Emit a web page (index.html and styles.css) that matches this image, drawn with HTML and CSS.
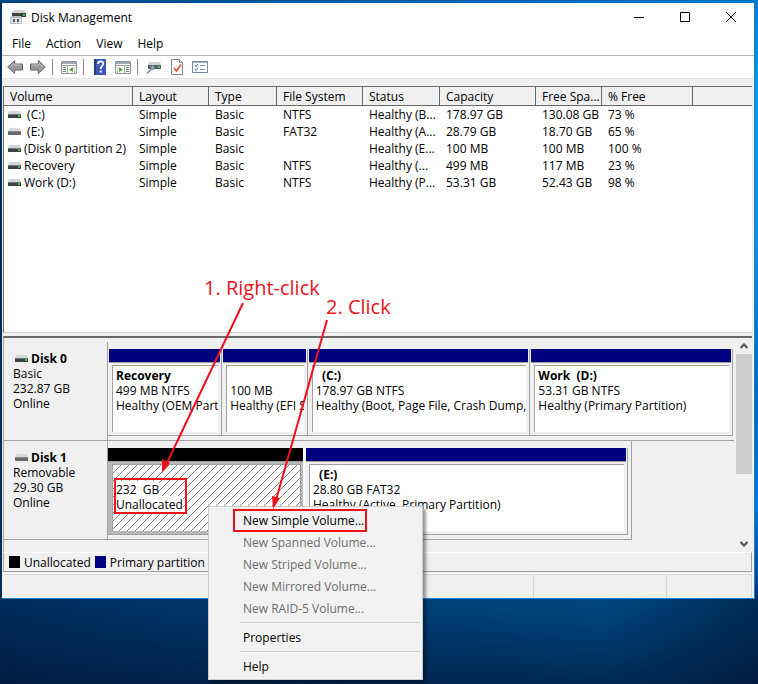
FILE: index.html
```
<!DOCTYPE html>
<html lang="en">
<head>
    <meta charset="UTF-8">
    <meta name="viewport" content="width=device-width, initial-scale=1.0">
    <title>Disk Management</title>
    <link rel="stylesheet" href="styles.css">
</head>
<body>
    <!-- shared drive icons -->
    <svg class="defs" width="0" height="0" aria-hidden="true">
        <symbol id="drive" viewBox="0 0 13 9">
            <path d="M1 1h11l1 3H0z" fill="#d4d6d6"/>
            <path d="M0 4h13v4H0z" fill="#3c4242"/>
            <path d="M0 4h13v1H0z" fill="#70777a"/>
            <path d="M10 5h2v2h-2z" fill="#38c850"/>
        </symbol>
        <symbol id="removable" viewBox="0 0 13 9">
            <path d="M1 1h11l1 3H0z" fill="#d8dada"/>
            <path d="M0 4h13v4H0z" fill="#686868"/>
            <path d="M0 4h13v1H0z" fill="#8c8c8c"/>
        </symbol>
    </svg>

    <main class="window">
        <header class="title-bar">
            <svg class="app-icon" width="16" height="16" viewBox="0 0 16 16">
                <path d="M4 1h11l1 3H2z" fill="#d0d4d4"/>
                <path d="M2 4h14v4H2z" fill="#394141"/>
                <path d="M13 5h2v2h-2z" fill="#3dcb55"/>
                <path d="M1 7h10l1 2v6H0V9z" fill="#b4b9bb"/>
                <path d="M1 9h10v5H1z" fill="#e4e6e6"/>
                <path d="M3 10h2v3H3zM7 10h2v3H7z" fill="#4c5355"/>
            </svg>
            <h1>Disk Management</h1>
            <div class="window-buttons">
                <button type="button" aria-label="Minimize"><svg width="10" height="10"><path d="M0 5.5h10" stroke="#000"/></svg></button>
                <button type="button" aria-label="Maximize"><svg width="10" height="10"><path d="M.5.5h9v9h-9z" fill="none" stroke="#000"/></svg></button>
                <button type="button" aria-label="Close"><svg width="10" height="10"><path d="M0 0l10 10M10 0L0 10" stroke="#000"/></svg></button>
            </div>
        </header>

        <nav class="menu-bar">
            <button type="button">File</button>
            <button type="button">Action</button>
            <button type="button">View</button>
            <button type="button">Help</button>
        </nav>

        <div class="toolbar">
            <div class="tool-group">
                <button type="button" aria-label="Back"><svg width="16" height="16" viewBox="0 0 16 16"><path d="M.7 8l7-6.5V5h7.8v6H7.700v3.500z" fill="#999" stroke="#666"/><path d="M3 8l4-3.500V6h7" fill="none" stroke="#c2c2c2"/></svg></button>
                <button type="button" aria-label="Forward"><svg width="16" height="16" viewBox="0 0 16 16"><path d="M15.300 8l-7-6.500V5H.5v6h7.800v3.500z" fill="#999" stroke="#666"/><path d="M2 6h7V4.500L13 8" fill="none" stroke="#c2c2c2"/></svg></button>
            </div>
            <div class="tool-group">
                <button type="button" aria-label="Show console tree"><svg width="16" height="16" viewBox="0 0 16 16"><path d="M.5 2.500h15v12H.5z" fill="#fff" stroke="#8a9099"/><path d="M1 3h14v2H1z" fill="#a4abb5"/><path d="M1 6.500h14M6.500 7v7" stroke="#9aa3ac"/><path d="M2 8.500h3M2 10.500h3M2 12.500h3" stroke="#5d9e52"/><path d="M12 8v5l-4-2.500z" fill="#55a345"/><path d="M13.500 8v6" stroke="#b7d6ae"/></svg></button>
            </div>
            <div class="tool-group">
                <button type="button" aria-label="Help"><svg width="16" height="16" viewBox="0 0 16 16"><path d="M2 0h12v16H2z" fill="#3c59b5"/><path d="M2 0h2v16H2z" fill="#243f8d"/><path d="M6 5c0-3.500 5.500-3.300 5.300-.2C11.200 7 8.700 7 8.700 10" fill="none" stroke="#fff" stroke-width="1.800"/><path d="M7.700 11.500h2v2h-2z" fill="#fff"/></svg></button>
                <button type="button" aria-label="Show action pane"><svg width="16" height="16" viewBox="0 0 16 16"><path d="M.5 2.500h15v12H.5z" fill="#fff" stroke="#8a9099"/><path d="M1 3h14v2H1z" fill="#a4abb5"/><path d="M1 6.500h14M9.500 7v7" stroke="#9aa3ac"/><path d="M11 8.500h3M11 10.500h3M11 12.500h3" stroke="#5d9e52"/><path d="M4 8v5l4-2.500z" fill="#55a345"/><path d="M2.500 8v6" stroke="#b7d6ae"/></svg></button>
            </div>
            <div class="tool-group">
                <button type="button" aria-label="Rescan disks"><svg width="16" height="16" viewBox="0 0 16 16"><path d="M3 3h11l1 3H2z" fill="#cdd2d2"/><path d="M2 6h13v4H2z" fill="#526262"/><path d="M12 7h2v2h-2z" fill="#46cc60"/><circle cx="6.500" cy="8.500" r="2" fill="#8fb0b8" stroke="#5f767e"/><path d="M5 10.500l-4 4" stroke="#71808a" stroke-width="1.500"/></svg></button>
                <button type="button" aria-label="Properties"><svg width="16" height="16" viewBox="0 0 16 16"><path d="M2.500.5h8l3 3v12h-11z" fill="#fff" stroke="#868686"/><path d="M10.500.5v3h3" fill="none" stroke="#868686"/><path d="M5 9l2.500 3L12 5.500" fill="none" stroke="#dc5c38" stroke-width="1.800"/></svg></button>
                <button type="button" aria-label="Options"><svg width="16" height="16" viewBox="0 0 16 16"><path d="M.5 2.500h15v11H.5z" fill="#fff" stroke="#7c8998"/><path d="M1 3.500h14" stroke="#a9b4c0"/><path d="M3 6l1 1.500L6 5M3 10l1 1.500L6 9" fill="none" stroke="#3a82c8"/><path d="M8 6.500h5M8 10.500h5" stroke="#8f9499"/></svg></button>
            </div>
        </div>

        <section class="volume-list">
            <table>
                <colgroup>
                    <col class="col-volume"><col class="col-layout"><col class="col-type"><col class="col-fs"><col class="col-status"><col class="col-capacity"><col class="col-free"><col class="col-percent"><col>
                </colgroup>
                <thead>
                    <tr><th>Volume</th><th>Layout</th><th>Type</th><th>File System</th><th>Status</th><th>Capacity</th><th>Free Spa...</th><th>% Free</th><th></th></tr>
                </thead>
                <tbody>
                    <tr><td><svg class="drive"><use href="#drive"/></svg>&nbsp;(C:)</td><td>Simple</td><td>Basic</td><td>NTFS</td><td>Healthy (B...</td><td>178.97 GB</td><td>130.08 GB</td><td>73 %</td><td></td></tr>
                    <tr><td><svg class="drive"><use href="#removable"/></svg>&nbsp;(E:)</td><td>Simple</td><td>Basic</td><td>FAT32</td><td>Healthy (A...</td><td>28.79 GB</td><td>18.70 GB</td><td>65 %</td><td></td></tr>
                    <tr><td><svg class="drive"><use href="#drive"/></svg>(Disk 0 partition 2)</td><td>Simple</td><td>Basic</td><td></td><td>Healthy (E...</td><td>100 MB</td><td>100 MB</td><td>100 %</td><td></td></tr>
                    <tr><td><svg class="drive"><use href="#drive"/></svg>Recovery</td><td>Simple</td><td>Basic</td><td>NTFS</td><td>Healthy (...</td><td>499 MB</td><td>117 MB</td><td>23 %</td><td></td></tr>
                    <tr><td><svg class="drive"><use href="#drive"/></svg>Work (D:)</td><td>Simple</td><td>Basic</td><td>NTFS</td><td>Healthy (P...</td><td>53.31 GB</td><td>52.43 GB</td><td>98 %</td><td></td></tr>
                </tbody>
            </table>
        </section>

        <section class="disk-pane">
            <div class="disks">
                <div class="disk">
                    <div class="disk-label">
                        <h2><svg class="drive"><use href="#drive"/></svg>Disk 0</h2>
                        <p>Basic</p>
                        <p>232.87 GB</p>
                        <p>Online</p>
                    </div>
                    <div class="partitions">
                        <div class="partition" style="flex-grow: 114">
                            <div class="bar"></div>
                            <div class="box"><h3>Recovery</h3><p>499 MB NTFS</p><p>Healthy (OEM Part</p></div>
                        </div>
                        <div class="partition" style="flex-grow: 85">
                            <div class="bar"></div>
                            <div class="box"><h3>&nbsp;</h3><p>100 MB</p><p>Healthy (EFI S</p></div>
                        </div>
                        <div class="partition" style="flex-grow: 223">
                            <div class="bar"></div>
                            <div class="box"><h3>&nbsp; (C:)</h3><p>178.97 GB NTFS</p><p>Healthy (Boot, Page File, Crash Dump, P</p></div>
                        </div>
                        <div class="partition" style="flex-grow: 203">
                            <div class="bar"></div>
                            <div class="box"><h3>Work &nbsp;(D:)</h3><p>53.31 GB NTFS</p><p>Healthy (Primary Partition)</p></div>
                        </div>
                    </div>
                </div>

                <div class="disk">
                    <div class="disk-label">
                        <h2><svg class="drive"><use href="#removable"/></svg>Disk 1</h2>
                        <p>Removable</p>
                        <p>29.30 GB</p>
                        <p>Online</p>
                    </div>
                    <div class="partitions short">
                        <div class="partition unallocated" style="flex-grow: 196">
                            <div class="bar"></div>
                            <div class="box"><h3>&nbsp;</h3><p><span>232 &nbsp;GB</span></p><p><span>Unallocated</span></p></div>
                        </div>
                        <div class="partition" style="flex-grow: 324">
                            <div class="bar"></div>
                            <div class="box"><h3>&nbsp; (E:)</h3><p>28.80 GB FAT32</p><p>Healthy (Active, Primary Partition)</p></div>
                        </div>
                    </div>
                </div>
            </div>
            <div class="scrollbar">
                <button type="button" aria-label="Scroll up"><svg width="8" height="6"><path d="M.5 5L4 1.500 7.500 5" fill="none" stroke="#505050" stroke-width="2"/></svg></button>
                <div class="thumb"></div>
                <button type="button" aria-label="Scroll down"><svg width="8" height="6"><path d="M.5 1L4 4.500 7.500 1" fill="none" stroke="#505050" stroke-width="2"/></svg></button>
            </div>
        </section>

        <div class="legend">
            <span class="swatch black"></span>Unallocated
            <span class="swatch navy"></span>Primary partition
        </div>
        <footer class="status-bar"><div></div><div></div><div></div></footer>
    </main>

    <div class="context-menu" role="menu">
        <button type="button" role="menuitem">New Simple Volume...</button>
        <button type="button" role="menuitem" disabled>New Spanned Volume...</button>
        <button type="button" role="menuitem" disabled>New Striped Volume...</button>
        <button type="button" role="menuitem" disabled>New Mirrored Volume...</button>
        <button type="button" role="menuitem" disabled>New RAID-5 Volume...</button>
        <hr>
        <button type="button" role="menuitem">Properties</button>
        <hr>
        <button type="button" role="menuitem">Help</button>
    </div>

    <!-- step markers -->
    <svg class="arrows" width="400" height="540" aria-hidden="true">
        <g fill="none" stroke="#f01018" stroke-width="2">
            <path d="M243 303L166 465M327 320L276 500"/>
            <path d="M115 479h71v34h-71zM234 510h132v21H234z"/>
        </g>
        <path d="M162 473l0-14 8 4zM273 509l-1-13 8 2z" fill="#f01018"/>
    </svg>
    <div class="step step-one">1. Right-click</div>
    <div class="step step-two">2. Click</div>
</body>
</html>
```
FILE: styles.css
```
:root {
    --face: #f0f0f0;
    --line: #a0a0a0;
    --dark: #696969;
    --navy: #000080;
}
* {
    box-sizing: border-box;
}
body {
    margin: 0;
    padding: 3px 3px 0 2px;
    min-height: 100vh;
    font: 12px/15px "Open Sans", "Noto Sans", sans-serif;
    color: #000;
    background:
        linear-gradient(90deg, #004585, #0078d0) top / 100% 3px no-repeat,
        linear-gradient(#0078d0, #0a9be0 15%, #1c8cd8 40%, #0068b8 65%, #0074d0 85%, #00386e) right top / 4px 598px no-repeat,
        linear-gradient(90deg, #002c5c, #00407a 50%, #004884 80%, #002c56) left top / 100% 100% no-repeat;
}
body::after {
    content: "";
    position: absolute;
    left: 0;
    right: 0;
    top: 599px;
    bottom: 0;
    background: linear-gradient(rgba(0, 20, 50, 0), rgba(0, 20, 50, 0.6));
}
h1, h2, h3, p {
    margin: 0;
    font-size: 12px;
    font-weight: 400;
}
button {
    border: 0;
    padding: 0;
    background: none;
    font: inherit;
    color: inherit;
}
svg {
    display: block;
}
.defs {
    position: absolute;
}
.window {
    background: var(--face);
    border-right: 1px solid #1883d7;
    border-bottom: 1px solid #1883d7;
}

/* title, menu, toolbar */
.title-bar {
    display: flex;
    align-items: center;
    height: 28px;
    padding-left: 8px;
    background: #fff;
}
.title-bar h1 {
    margin-left: 5px;
}
.window-buttons {
    display: flex;
    margin-left: auto;
}
.window-buttons button {
    display: flex;
    align-items: center;
    justify-content: center;
    width: 46px;
    height: 28px;
}
.menu-bar {
    display: flex;
    gap: 15px;
    height: 25px;
    padding: 0 10px;
    background: #fff;
    border-bottom: 1px solid #b4b4b4;
}
.toolbar {
    display: flex;
    align-items: center;
    height: 23px;
    padding: 0 5px;
    background: #fff;
    border-bottom: 1px solid #e4e4e4;
}
.tool-group {
    display: flex;
    gap: 7px;
}
.tool-group + .tool-group {
    margin-left: 6px;
    padding-left: 8px;
    border-left: 1px solid #8c8c8c;
}

/* volume list */
.volume-list {
    height: 247px;
    margin: 7px 2px 0 1px;
    background: #fff;
    border-top: 1px solid var(--dark);
    border-left: 1px solid var(--dark);
    border-bottom: 1px solid #d0d0d0;
}
.volume-list table {
    width: 100%;
    table-layout: fixed;
    border-collapse: separate;
    border-spacing: 0;
}
.col-volume { width: 129px; }
.col-layout { width: 76px; }
.col-type { width: 68px; }
.col-fs { width: 86px; }
.col-status { width: 77px; }
.col-capacity { width: 96px; }
.col-free { width: 66px; }
.col-percent { width: 91px; }
.volume-list th {
    height: 19px;
    padding: 0 0 0 6px;
    font-weight: 400;
    text-align: left;
    white-space: nowrap;
    background: var(--face);
    border-right: 1px solid var(--dark);
    border-bottom: 1px solid var(--dark);
}
.volume-list th:last-child {
    border-right: 0;
}
.volume-list td {
    height: 17px;
    padding: 0 0 0 6px;
    white-space: nowrap;
}
.volume-list td:first-child {
    padding-left: 4px;
}
.drive {
    display: inline-block;
    width: 13px;
    height: 9px;
    margin-right: 3px;
}

/* graphical view */
.disk-pane {
    display: flex;
    margin: 3px 2px 0 1px;
    border-top: 2px solid var(--dark);
    border-left: 1px solid var(--line);
}
.disks {
    flex: 1;
    min-width: 0;
    padding: 4px 2px 12px 0;
}
.disk {
    display: flex;
    height: 99px;
}
.disk-label {
    width: 104px;
    padding: 9px;
    border-right: 1px solid var(--line);
    border-bottom: 1px solid var(--line);
}
.disk-label h2 {
    padding-left: 2px;
    font-weight: 700;
}
.partitions {
    display: flex;
    flex: 1;
    min-width: 0;
    padding: 7px 1px 4px 0;
    border-bottom: 1px solid var(--line);
}
.partitions.short {
    flex: none;
    width: 524px;
    padding-right: 3px;
    border-right: 1px solid var(--line);
}
.partition {
    flex: 1 1 0;
    min-width: 0;
    border-right: 1px solid var(--line);
    border-bottom: 1px solid var(--line);
}
.bar {
    height: 14px;
    margin: 0 1px;
    background: var(--navy);
    border-bottom: 1px solid var(--line);
}
.box {
    height: 67px;
    margin: 2px 3px 0 4px;
    padding: 2px 0 0 3px;
    overflow: hidden;
    white-space: nowrap;
    background: #fff;
    border-top: 1px solid var(--line);
    border-left: 1px solid var(--line);
}
.box h3 {
    font-weight: 700;
}
.unallocated {
    background: #b8b8b8;
    border-right: 2px solid #fff;
}
.unallocated .bar {
    margin: 0;
    background: #000;
}
.unallocated .box {
    margin-right: 2px;
    border-right: 1px solid var(--line);
    background: linear-gradient(135deg, #fff 44%, #888 50%, #fff 56%) 0 0 / 8px 8px;
}
.unallocated span {
    background: #fff;
}
.scrollbar {
    display: flex;
    flex-direction: column;
    width: 16px;
}
.scrollbar button {
    display: flex;
    align-items: center;
    justify-content: center;
    height: 16px;
}
.scrollbar button:last-child {
    margin-top: auto;
}
.thumb {
    height: 120px;
    background: #cdcdcd;
}
.legend {
    display: flex;
    align-items: center;
    gap: 4px;
    height: 20px;
    margin: 0 2px 0 1px;
    padding-left: 5px;
    border: 1px solid var(--line);
    border-top-color: #fff;
}
.swatch {
    width: 11px;
    height: 12px;
}
.black { background: #000; }
.navy { background: var(--navy); }
.status-bar {
    display: flex;
    height: 25px;
    margin-top: 1px;
    padding-right: 2px;
    border-top: 1px solid #fff;
}
.status-bar div {
    width: 133px;
    border-top: 1px solid #d7d7d7;
    border-right: 1px solid #d7d7d7;
}
.status-bar div:first-child {
    flex: 1;
}
.status-bar div:last-child {
    width: 85px;
}

/* popup menu */
.context-menu {
    position: absolute;
    z-index: 1;
    left: 208px;
    top: 506px;
    width: 215px;
    padding: 2px;
    background: #f2f2f2;
    border: 1px solid #ccc;
    box-shadow: 3px 3px 3px rgba(0, 0, 0, 0.4);
}
.context-menu button {
    display: block;
    width: 100%;
    height: 22px;
    padding-left: 32px;
    text-align: left;
}
.context-menu button:disabled {
    color: #6d6d6d;
}
.context-menu hr {
    margin: 3px 0 3px 29px;
    border: 0;
    border-top: 1px solid #d0d0d0;
}
.arrows {
    position: absolute;
    z-index: 2;
    left: 0;
    top: 0;
    pointer-events: none;
}
.step {
    position: absolute;
    z-index: 2;
    font-size: 20px;
    line-height: 26px;
    color: #e8141c;
}
.step-one {
    left: 204px;
    top: 275px;
}
.step-two {
    left: 326px;
    top: 294px;
}
```
